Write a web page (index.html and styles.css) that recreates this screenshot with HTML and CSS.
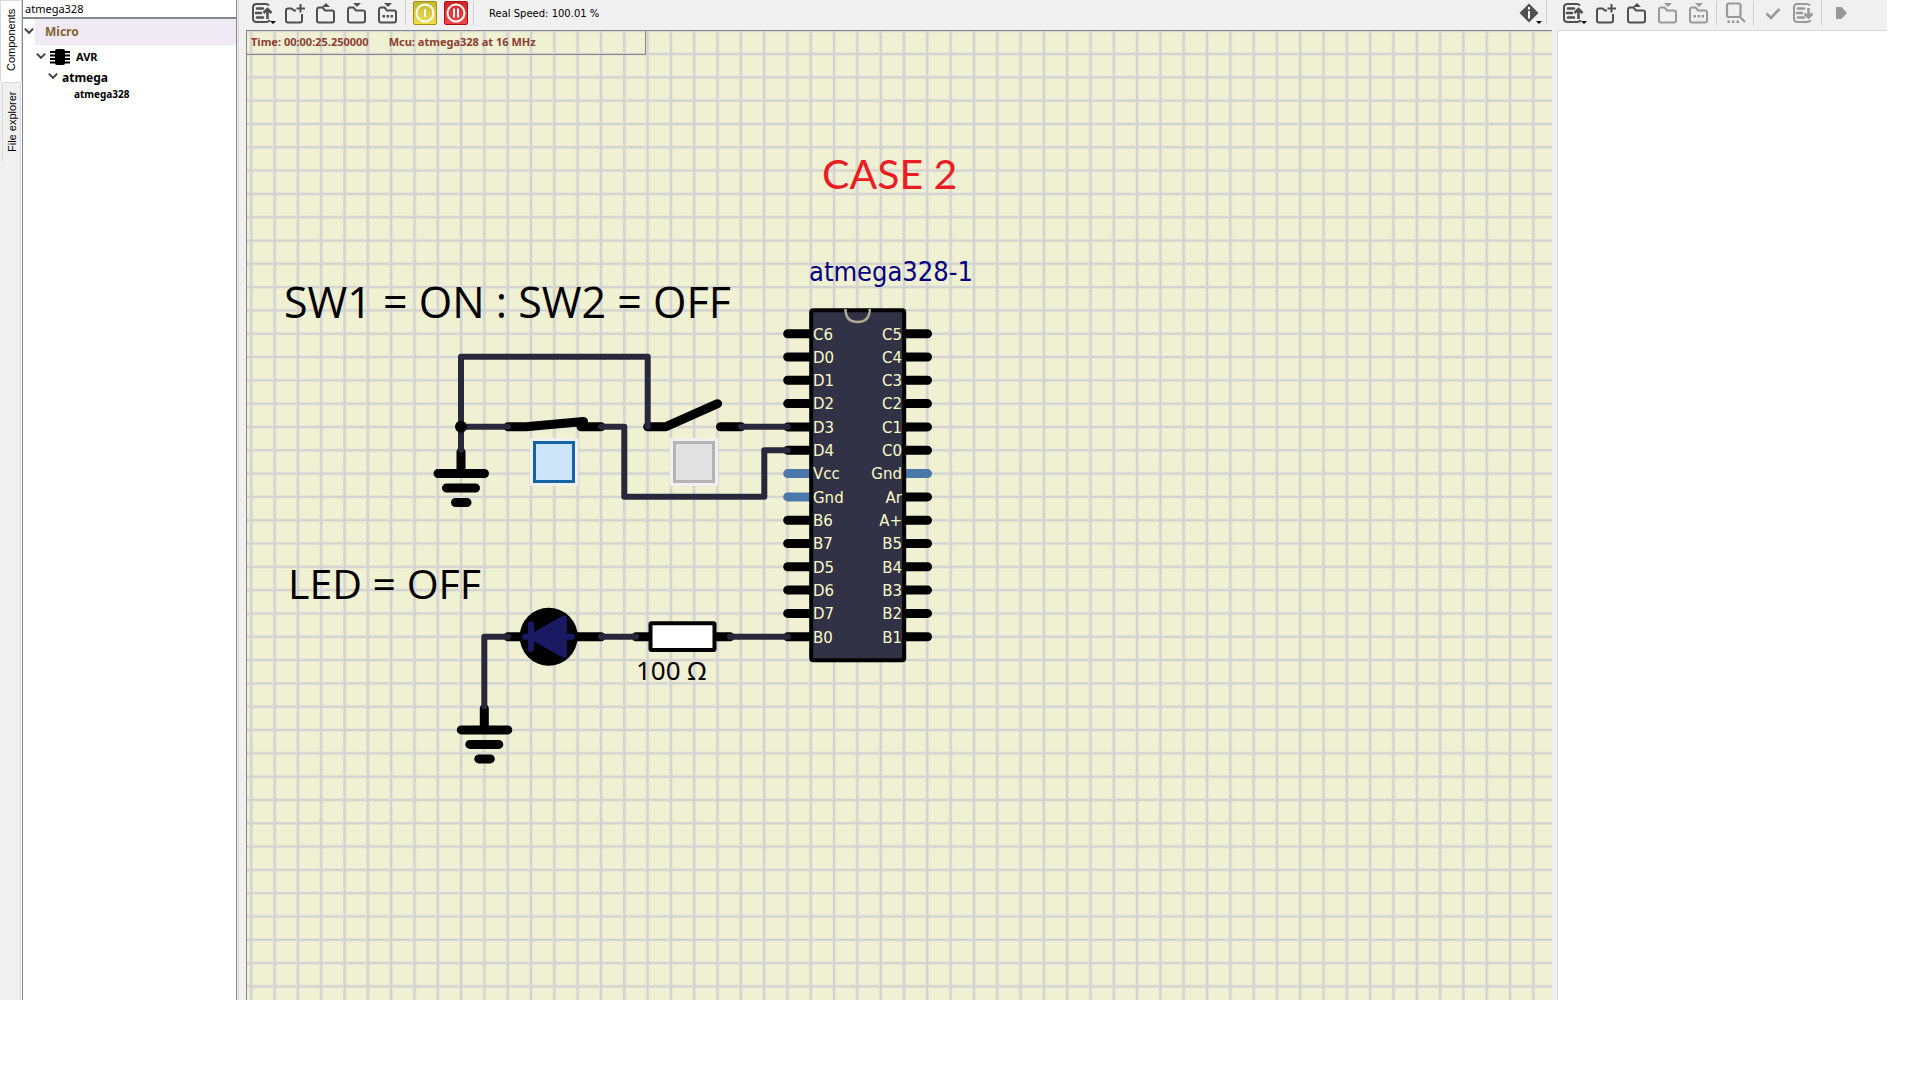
FILE: index.html
```html
<!DOCTYPE html>
<html lang="en">
<head>
<meta charset="utf-8">
<title>Circuit simulator</title>
<link rel="stylesheet" href="styles.css">
</head>
<body>
<svg class="defs" width="0" height="0" aria-hidden="true">
  <defs>
    <g id="list-frame" fill="none" stroke="currentColor" stroke-width="2">
      <path d="M18 4.500Q17 3 14.500 3H5.500Q2 3 2 6.500V17.500Q2 21 5.500 21H15Q18 21 18.500 19"/>
      <path d="M6 7.500H12M5 12H10M6 16.500H12" stroke-width="2.600" stroke-linecap="round"/>
    </g>
    <g id="folder" fill="none" stroke="currentColor" stroke-width="2">
      <path d="M3 9Q3 6.500 5 6.500H8.500L11 9.500H18Q20 9.500 20 11.500V19.500Q20 21.500 18 21.500H5Q3 21.500 3 19.500Z"/>
    </g>
    <symbol id="i-list-up" viewBox="0 0 24 24"><use href="#list-frame"/><path d="M16.500 18V9M12.500 12L16.500 8L20.500 12" fill="none" stroke="currentColor" stroke-width="2.600"/></symbol>
    <symbol id="i-list-down" viewBox="0 0 24 24"><use href="#list-frame"/><path d="M16.500 7V16M12.500 12.500L16.500 16.500L20.500 12.500" fill="none" stroke="currentColor" stroke-width="2.600"/></symbol>
    <symbol id="i-new" viewBox="0 0 24 24"><path d="M13 9.500H11L8.500 7.500H5Q3 7.500 3 9.500V19.500Q3 21.500 5 21.500H17Q19 21.500 19 19.500V13M17.500 3V11.500M13.500 7.500H22" fill="none" stroke="currentColor" stroke-width="2"/></symbol>
    <symbol id="i-open" viewBox="0 0 24 24"><use href="#folder"/><path d="M8 6L12 2L16 6Z" fill="currentColor"/></symbol>
    <symbol id="i-save" viewBox="0 0 24 24"><use href="#folder"/><path d="M8 2H16L12 6Z" fill="currentColor"/></symbol>
    <symbol id="i-save-as" viewBox="0 0 24 24"><use href="#folder"/><path d="M8 2H16L12 6ZM6.500 14h2.500v2.500h-2.500zM10.500 14h2.500v2.500h-2.500zM14.500 14h2.500v2.500h-2.500z" fill="currentColor"/></symbol>
    <symbol id="i-find" viewBox="0 0 24 24"><path d="M13 16H5Q3 16 3 14V4.500Q3 2.500 5 2.500H14.500Q16.500 2.500 16.500 4.500V14Q16.500 16 13 16M15 15L21 21" fill="none" stroke="currentColor" stroke-width="2.200"/><path d="M3.500 19.500h2.500v2.500h-2.500zM8 19.500h2.500v2.500h-2.500zM12.500 19.500h2.500v2.500h-2.500z" fill="currentColor"/></symbol>
    <symbol id="i-check" viewBox="0 0 24 24"><path d="M5.500 12.500L10 17L18.500 8" fill="none" stroke="currentColor" stroke-width="2.600"/></symbol>
    <symbol id="i-run" viewBox="0 0 24 24"><path d="M7 6H12.500L18 12L12.500 18H7Z" fill="currentColor"/></symbol>
    <symbol id="i-info" viewBox="0 0 24 24"><path d="M12 2.500L21.500 12L12 21.500L2.500 12Z" fill="currentColor"/><path d="M11 6h2v2.500h-2zM11 10h2v7.500h-2z" fill="#fff"/></symbol>
    <symbol id="i-chevron" viewBox="0 0 10 10"><path d="M1.500 3L5 6.500L8.500 3" fill="none" stroke="currentColor" stroke-width="1.600"/></symbol>
  </defs>
</svg>
<div class="app">
  <nav class="side-tabs" role="tablist">
    <button class="side-tab side-tab-active" role="tab" aria-selected="true">Components</button>
    <button class="side-tab" role="tab" aria-selected="false">File explorer</button>
  </nav>

  <aside class="components">
    <input class="search" type="text" value="atmega328" aria-label="Search components">
    <ul class="tree">
      <li class="node node-category"><svg class="chevron"><use href="#i-chevron"/></svg><span class="node-label">Micro</span></li>
      <li class="node node-family"><svg class="chevron"><use href="#i-chevron"/></svg>
        <svg class="chip-icon" viewBox="0 0 22 18"><rect x="6" y="1" width="10" height="16" rx="2"/><path d="M1 4H21M1 7.500H21M1 11H21M1 14.500H21" stroke="#000" stroke-width="2"/></svg>
        <span>AVR</span></li>
      <li class="node node-group"><svg class="chevron"><use href="#i-chevron"/></svg><span>atmega</span></li>
      <li class="node node-part"><span>atmega328</span></li>
    </ul>
  </aside>

  <main class="circuit">
    <div class="toolbar">
      <button class="tool tool-menu" aria-label="Recent circuits"><svg><use href="#i-list-up"/></svg></button>
      <button class="tool" aria-label="New circuit"><svg><use href="#i-new"/></svg></button>
      <button class="tool" aria-label="Open circuit"><svg><use href="#i-open"/></svg></button>
      <button class="tool" aria-label="Save circuit"><svg><use href="#i-save"/></svg></button>
      <button class="tool" aria-label="Save circuit as"><svg><use href="#i-save-as"/></svg></button>
      <span class="separator"></span>
      <button class="tool" aria-label="Power circuit"><span class="badge badge-power"><svg viewBox="0 0 24 24"><circle cx="12" cy="12" r="8.500"/><path d="M12 8V16"/></svg></span></button>
      <button class="tool" aria-label="Pause simulation"><span class="badge badge-pause"><svg viewBox="0 0 24 24"><circle cx="12" cy="12" r="8.500"/><path d="M10 7.500V16.500M14 7.500V16.500"/></svg></span></button>
      <span class="separator"></span>
      <span class="speed">Real Speed: 100.01 %</span>
      <button class="tool tool-menu tool-info" aria-label="Info"><svg><use href="#i-info"/></svg></button>
      <span class="separator separator-last"></span>
    </div>
    <div class="canvas">
      <svg class="schematic" role="img" aria-label="Schematic">
        <defs>
          <pattern id="grid" x="4.300" y="-0.300" width="23.310" height="23.310" patternUnits="userSpaceOnUse">
            <path d="M0 0H1.300V23.310H0ZM22.010 0H23.310V23.310H22.010ZM1.300 0H22.010V1.200H1.300ZM1.300 22.110H22.010V23.310H1.300Z" fill="#d2d2d2"/>
          </pattern>
          <g id="ground" class="lead">
            <path d="M461 452V473M438 473.500H484.500M446.500 488H475.500M455.500 502.500H467"/>
          </g>
        </defs>
        <rect width="100%" height="100%" fill="url(#grid)"/>
        <g transform="translate(-247 -31)">
          <use href="#ground"/>
          <use href="#ground" x="23.300" y="256.400"/>
          <path class="lead" d="M508 426.700H526L583.500 421.500M581 426.700H601M647.700 426.700H666L717.600 403.700M720.500 426.700H741"/>
          <path class="lead" d="M508 636.700H601M636 636.700H730"/>

          <path class="lead" d="M787.700 333.700H811M787.700 357H811M787.700 380.300H811M787.700 403.600H811M787.700 426.900H811M787.700 450.300H811M787.700 520.200H811M787.700 543.500H811M787.700 566.800H811M787.700 590.100H811M787.700 613.400H811M787.700 636.700H811"/>
          <path class="lead" d="M904 333.700H927.500M904 357H927.500M904 380.300H927.500M904 403.600H927.500M904 426.900H927.500M904 450.300H927.500M904 496.900H927.500M904 520.200H927.500M904 543.500H927.500M904 566.800H927.500M904 590.100H927.500M904 613.400H927.500M904 636.700H927.500"/>
          <path class="lead supply" d="M787.700 473.600H811M787.700 496.900H811M904 473.600H927.500"/>

          <path class="wire" d="M461 450V356.700H647.700V426.700M461 426.700H508M601 426.700H624.300V496.700H764.300V450.300H787.700M741 426.700H787.700"/>
          <path class="wire" d="M484.300 706V636.700H508M601 636.700H636M730 636.700H787.700"/>
          <circle cx="461" cy="426.700" r="6"/>

          <circle cx="548.700" cy="636.700" r="29"/>
          <path class="diode" d="M525 636.700H572M531 624.500V649M564 618.500V655L532 636.700Z"/>
          <rect x="650.500" y="623.300" width="64" height="26.700" rx="1" fill="#fff" stroke="#000" stroke-width="4"/>

          <rect x="811.200" y="310.200" width="93" height="350" rx="2" fill="#323246" stroke="#000" stroke-width="4"/>
          <path d="M845.500 309Q845.500 322 857.600 322T869.800 309" fill="none" stroke="#aaa896" stroke-width="2.500"/>

          <g class="pin-names">
            <text x="813" y="340">C6</text><text x="813" y="363">D0</text><text x="813" y="386">D1</text><text x="813" y="409">D2</text><text x="813" y="433">D3</text><text x="813" y="456">D4</text><text x="813" y="479">Vcc</text><text x="813" y="503">Gnd</text><text x="813" y="526">B6</text><text x="813" y="549">B7</text><text x="813" y="573">D5</text><text x="813" y="596">D6</text><text x="813" y="619">D7</text><text x="813" y="643">B0</text>
          </g>
          <g class="pin-names pin-names-right">
            <text x="902" y="340">C5</text><text x="902" y="363">C4</text><text x="902" y="386">C3</text><text x="902" y="409">C2</text><text x="902" y="433">C1</text><text x="902" y="456">C0</text><text x="902" y="479">Gnd</text><text x="902" y="503">Ar</text><text x="902" y="526">A+</text><text x="902" y="549">B5</text><text x="902" y="573">B4</text><text x="902" y="596">B3</text><text x="902" y="619">B2</text><text x="902" y="643">B1</text>
          </g>

          <text class="note note-title" x="822" y="189">CASE 2</text>
          <text class="note note-switches" x="284" y="318">SW1 = ON : SW2 = OFF</text>
          <text class="note" x="288" y="599">LED = OFF</text>
          <text class="part-name" x="809" y="281">atmega328-1</text>
          <text class="part-value" x="636" y="680">100 Ω</text>
        </g>
      </svg>
      <div class="status"><span>Time: 00:00:25.250000</span><span>Mcu: atmega328 at 16 MHz</span></div>
      <button class="switch switch-one" aria-pressed="true" aria-label="Switch 1"></button>
      <button class="switch switch-two" aria-pressed="false" aria-label="Switch 2"></button>
    </div>
  </main>

  <section class="editor">
    <div class="toolbar">
      <button class="tool tool-menu" aria-label="Recent files"><svg><use href="#i-list-up"/></svg></button>
      <button class="tool" aria-label="New file"><svg><use href="#i-new"/></svg></button>
      <button class="tool" aria-label="Open file"><svg><use href="#i-open"/></svg></button>
      <button class="tool" disabled aria-label="Save file"><svg><use href="#i-save"/></svg></button>
      <button class="tool" disabled aria-label="Save file as"><svg><use href="#i-save-as"/></svg></button>
      <span class="separator"></span>
      <button class="tool" disabled aria-label="Find"><svg><use href="#i-find"/></svg></button>
      <span class="separator"></span>
      <button class="tool" disabled aria-label="Compile"><svg><use href="#i-check"/></svg></button>
      <button class="tool" disabled aria-label="Upload"><svg><use href="#i-list-down"/></svg></button>
      <span class="separator"></span>
      <button class="tool" disabled aria-label="Debug"><svg><use href="#i-run"/></svg></button>
    </div>
    <div class="documents"></div>
  </section>
</div>
</body>
</html>
```
FILE: styles.css
```css
* { box-sizing: border-box; }

body {
  margin: 0;
  background: #fff;
  color: #000;
  font-family: "Noto Sans", "Open Sans", sans-serif;
  font-size: 11px;
}

button {
  margin: 0;
  padding: 0;
  border: 0;
  background: none;
  color: inherit;
  font: inherit;
}

.defs { position: absolute; }

.app {
  display: flex;
  height: calc(100vh - 76px);
  margin-right: 33px;
  background: #f0f0f0;
}

/* Vertical tabs */
.side-tabs {
  display: flex;
  flex: 0 0 22px;
  flex-direction: column;
  align-items: flex-start;
  box-shadow: inset -1px 0 #fff, inset -2px 0 #d9d9d9;
}

.side-tab {
  width: 19px;
  height: 79px;
  margin-left: 2px;
  border: 1px solid #d9d9d9;
  border-top: 0;
  writing-mode: vertical-rl;
  transform: rotate(180deg);
  font-family: "Liberation Sans", sans-serif;
  font-size: 11px;
  line-height: 16px;
  text-align: center;
}

.side-tab-active {
  width: 22px;
  height: 82px;
  margin-left: 0;
  padding-top: 4px;
  background: #fff;
}

/* Component list */
.components {
  display: flex;
  flex: 0 0 215px;
  flex-direction: column;
  border: solid #828790;
  border-width: 0 1px;
  background: #fff;
}

.search {
  height: 19px;
  padding: 0 2px;
  border: 0;
  border-bottom: 2px solid #828790;
  font: inherit;
  font-size: 11px;
}

.tree {
  margin: 0;
  padding: 0;
  list-style: none;
  font-weight: 700;
}

.node {
  display: flex;
  align-items: center;
}

.chevron {
  width: 12px;
  height: 12px;
  margin-bottom: 2px;
  color: #444;
}

.node-category { height: 26px; font-size: 12px; color: #84642f; }
.node-category .node-label {
  flex: 1;
  padding-left: 10px;
  background: #f0eaf5;
  line-height: 26px;
}
.node-family { height: 23px; padding-left: 12px; }
.node-group { height: 18px; padding-left: 24px; font-size: 12px; gap: 3px; }
.node-part { height: 15px; padding-left: 51px; font-size: 10px; }

.chip-icon {
  width: 22px;
  height: 18px;
  margin: 0 5px 0 2px;
}

/* Toolbars */
.toolbar {
  display: flex;
  align-items: center;
  height: 30px;
  padding-bottom: 4px;
}

.tool {
  display: flex;
  position: relative;
  flex: 0 0 31px;
  height: 26px;
  align-items: center;
  justify-content: center;
  color: #505050;
}

.tool svg { width: 24px; height: 24px; }
.tool:disabled { color: #999; }
.tool-menu { flex-basis: 33px; }

.tool-menu::after {
  content: "";
  position: absolute;
  right: 3px;
  bottom: 2px;
  border: solid transparent;
  border-width: 3px 3px 0;
  border-top-color: #000;
}

.separator {
  flex: 0 0 1px;
  height: 24px;
  margin: 0 3px 0 2px;
  background: #cfcfcf;
}

.separator-last { margin: 0 5px 0 1px; }

.badge {
  display: flex;
  align-items: center;
  justify-content: center;
  width: 24px;
  height: 24px;
  border: 1px solid;
  border-radius: 2px;
}

.badge svg { flex: none; fill: none; stroke: #fff; stroke-width: 2px; }
.badge-power { border-color: #a09010; background: linear-gradient(#c4b830, #ece04c); }
.badge-pause { border-color: #b01010; background: linear-gradient(#d02828, #f04848); }

.speed {
  margin-left: 12px;
  font-family: "DejaVu Sans", sans-serif;
  font-size: 10px;
}

.tool-info { margin-left: auto; }

/* Circuit */
.circuit {
  display: flex;
  flex: 1;
  flex-direction: column;
  min-width: 0;
  padding-left: 7px;
  margin-left: 2px;
  box-shadow: -1px 0 #d9d9d9;
}

.canvas {
  position: relative;
  flex: 1;
  overflow: hidden;
  border: solid #828790;
  border-width: 1px 0 0 1px;
  background: #f0f0d2;
}

.schematic {
  position: absolute;
  width: 100%;
  height: 100%;
}

.lead, .wire, .diode {
  fill: none;
  stroke: #000;
  stroke-linecap: round;
  stroke-linejoin: round;
  stroke-width: 9px;
}

.supply { stroke: #4b78aa; }
.wire { stroke: #28283c; stroke-width: 6px; }
.diode { fill: #1a1a64; stroke: #1a1a64; stroke-width: 6px; }

.pin-names { fill: #fafac8; font-family: "DejaVu Sans", sans-serif; font-size: 15px; }
.pin-names-right { text-anchor: end; }

.note { font-family: "Open Sans", sans-serif; font-size: 41px; }
.note-switches { font-size: 43px; }
.note-title { fill: #ed1c24; font-family: Lato, sans-serif; }
.part-name {
  fill: #000080;
  font-family: "DejaVu Sans Condensed", "Noto Sans", sans-serif;
  font-size: 27px;
}
.part-value { font-size: 26px; }

.status {
  display: flex;
  position: relative;
  width: 399px;
  height: 24px;
  padding: 0 4px;
  gap: 20px;
  border: solid #828790;
  border-width: 0 1px 1px 0;
  color: #8b4030;
  font-size: 11px;
  font-weight: 700;
  line-height: 21px;
  white-space: nowrap;
}

.switch {
  position: absolute;
  top: 410px;
  width: 42px;
  height: 42px;
  border: 3px solid #b4b4b4;
  background: #e1e1e1;
  box-shadow: 0 0 0 3px #f0f0f0;
}

.switch-one { left: 286px; border-color: #1464a5; background: #cce4f7; }
.switch-two { left: 426px; }

/* Editor */
.editor {
  display: flex;
  flex: 0 0 335px;
  flex-direction: column;
  padding-left: 5px;
}

.documents {
  flex: 1;
  border: solid #d9d9d9;
  border-width: 1px 0 0 1px;
  background: #fff;
}
```
